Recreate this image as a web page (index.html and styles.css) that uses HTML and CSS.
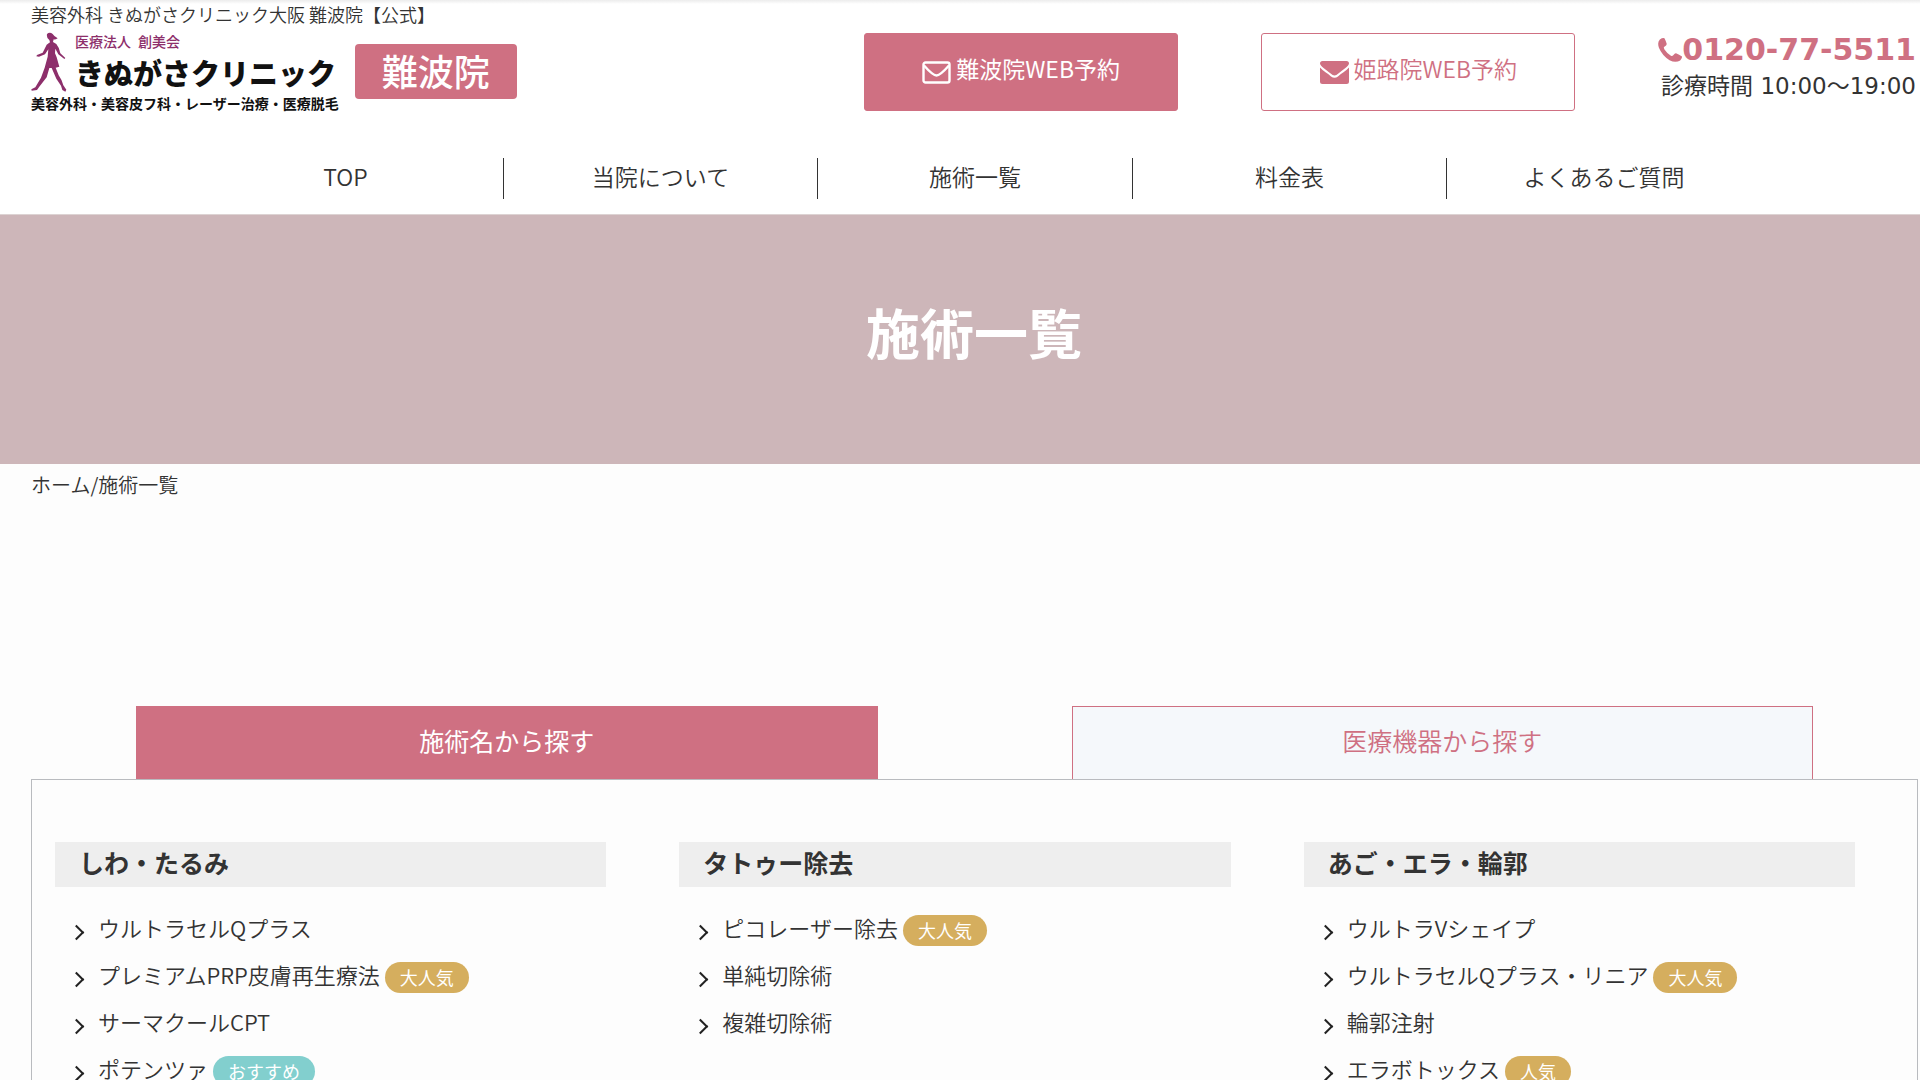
FILE: index.html
```html
<!DOCTYPE html>
<html lang="ja">
<head>
<meta charset="utf-8">
<meta name="viewport" content="width=device-width, initial-scale=1">
<title>施術一覧 | きぬがさクリニック大阪 難波院</title>
<link rel="stylesheet" href="styles.css">
</head>
<body>
<header class="site-header">
  <p class="site-lead">美容外科 きぬがさクリニック大阪 難波院【公式】</p>
  <div class="header-main">
    <a class="brand" href="#">
      <span class="logo">
        <span class="logo-top">
          <svg class="logo-figure" viewBox="36 36 108 180" aria-hidden="true">
            <path d="M84 42Q92 34 101 42Q106 50 116 55Q108 60 104 58L102 66L112 72Q122 84 124 100L139 114L136 117L118 103L109 86L108 100L113 112L121 140L110 143L119 166Q128 178 133 196L142 209L139 215L130 210L126 197L112 176L98 144L91 144L83 172L62 199L54 210L38 212L37 208L49 202L66 173L77 143L86 110L88 88L78 103L60 110L52 109L54 105L71 98L83 74L93 67L91 60Q82 55 84 42Z"/>
          </svg>
          <span class="logo-words">
            <span class="logo-corp">医療法人&#8194;創美会</span>
            <span class="logo-name">きぬがさクリニック</span>
          </span>
        </span>
        <span class="logo-tag">美容外科・美容皮フ科・レーザー治療・医療脱毛</span>
      </span>
      <span class="branch">難波院</span>
    </a>
    <a class="reserve reserve-solid" href="#">
      <svg class="mail" viewBox="0 0 29 23" aria-hidden="true"><rect x="1.5" y="1.5" width="26" height="20" rx="2" fill="none" stroke="currentColor" stroke-width="2.4"/><path d="M2 4.500C6 9 12 14.500 14.500 14.500S23 9 27 4.500" fill="none" stroke="currentColor" stroke-width="2.400"/></svg>
      <span>難波院WEB予約</span>
    </a>
    <a class="reserve" href="#">
      <svg class="mail" viewBox="0 0 29 23" aria-hidden="true"><path d="M2.500 0h24Q29 0 29 2.500C29 5 22 9.500 19 12Q16 14.500 14.500 14.500T10 12C7 9.500 0 5 0 2.500Q0 0 2.500 0Z"/><path d="M0 6.500C3 10 8 12.500 11 15.500Q14.500 18 18 15.500C21 12.500 26 10 29 6.500V20.500Q29 23 26.500 23H2.500Q0 23 0 20.500Z"/></svg>
      <span>姫路院WEB予約</span>
    </a>
    <div class="contact">
      <a class="tel" href="tel:0120775511"><svg class="phone" viewBox="0 0 26 26" aria-hidden="true"><path d="M2 1.500Q5-.5 7 .2Q8.500 3 9.500 6.500Q9.500 8 6.500 9.800Q6 10.500 7 12.500Q10 17 14 19.300Q15.500 20 16.500 18.800Q18.300 16.300 19.500 16.500Q23 18 26 20Q26.300 22 24 24.300Q19 27.500 12.500 24Q4.500 19 1 10.500Q-1 4.500 2 1.500Z"/></svg>0120-77-5511</a>
      <p class="hours">診療時間 10:00～19:00</p>
    </div>
  </div>
  <nav class="gnav" aria-label="メインメニュー">
    <a href="#">TOP</a>
    <a href="#">当院について</a>
    <a href="#">施術一覧</a>
    <a href="#">料金表</a>
    <a href="#">よくあるご質問</a>
  </nav>
</header>
<div class="hero"><h1>施術一覧</h1></div>
<main class="content">
  <nav class="crumbs" aria-label="パンくずリスト"><a href="#">ホーム</a>/<span>施術一覧</span></nav>
  <div class="tabs">
    <button class="tab tab-active" type="button">施術名から探す</button>
    <button class="tab" type="button">医療機器から探す</button>
  </div>
  <div class="panel">
    <section>
      <h2>しわ・たるみ</h2>
      <ul>
        <li><a href="#">ウルトラセルQプラス</a></li>
        <li><a href="#">プレミアムPRP皮膚再生療法</a><span class="badge">大人気</span></li>
        <li><a href="#">サーマクールCPT</a></li>
        <li><a href="#">ポテンツァ</a><span class="badge badge-teal">おすすめ</span></li>
      </ul>
    </section>
    <section>
      <h2>タトゥー除去</h2>
      <ul>
        <li><a href="#">ピコレーザー除去</a><span class="badge">大人気</span></li>
        <li><a href="#">単純切除術</a></li>
        <li><a href="#">複雑切除術</a></li>
      </ul>
    </section>
    <section>
      <h2>あご・エラ・輪郭</h2>
      <ul>
        <li><a href="#">ウルトラVシェイプ</a></li>
        <li><a href="#">ウルトラセルQプラス・リニア</a><span class="badge">大人気</span></li>
        <li><a href="#">輪郭注射</a></li>
        <li><a href="#">エラボトックス</a><span class="badge">人気</span></li>
      </ul>
    </section>
  </div>
</main>
</body>
</html>
```
FILE: styles.css
```css
:root {
  --rose: #cf7082;
  --ink: #333;
}

* {
  box-sizing: border-box;
  margin: 0;
  padding: 0;
}

body {
  background: #fdfdfd;
  color: var(--ink);
  font-family: "Noto Sans CJK JP", sans-serif;
  font-size: 22px;
  font-weight: 350;
}

a {
  color: inherit;
  text-decoration: none;
}

ul {
  list-style: none;
}

svg {
  display: block;
  fill: currentColor;
  flex: none;
}

/* Header */
.site-header {
  background: linear-gradient(#ececec, #fff 4px);
  border-bottom: 1px solid #ddd3d3;
  padding: 3px 2px 0 31px;
}

.site-lead {
  font-size: 18px;
  line-height: 22px;
}

.header-main {
  display: flex;
  align-items: flex-start;
  gap: 83px;
  padding: 7px 2px 0 0;
  height: 109px;
}

.brand {
  display: flex;
  gap: 16px;
  margin-right: auto;
}

.logo {
  color: #111;
  font-weight: 700;
  white-space: nowrap;
}

.logo-top {
  display: flex;
  gap: 8px;
}

.logo-figure {
  width: 36px;
  height: 60px;
  color: #8d2f6b;
}

.logo-words,
.logo-corp,
.logo-name,
.logo-tag {
  display: block;
}

.logo-corp {
  color: #8d2f6b;
  font-size: 14px;
  font-weight: 500;
  line-height: 18px;
}

.logo-name {
  font-size: 29px;
  font-weight: 900;
  line-height: 44px;
}

.logo-tag {
  font-size: 14px;
  line-height: 18px;
}

.branch {
  align-self: flex-start;
  margin-top: 12px;
  padding: 0 27px 2px;
  border-radius: 4px;
  background: var(--rose);
  color: #fff;
  font-size: 36px;
  font-weight: 500;
  line-height: 53px;
}

.reserve {
  display: flex;
  flex: 0 0 calc(100% / 6);
  align-items: center;
  justify-content: center;
  gap: 5px;
  height: 78px;
  margin-top: 1px;
  padding-bottom: 8px;
  border: 1px solid var(--rose);
  border-radius: 3px;
  color: var(--rose);
  font-size: 23px;
  white-space: nowrap;
}

.reserve-solid {
  background: var(--rose);
  color: #fff;
  font-weight: 400;
}

.mail {
  width: 29px;
  height: 23px;
  margin-top: 8px;
}

.contact {
  white-space: nowrap;
  text-align: right;
}

.tel {
  display: flex;
  align-items: center;
  color: var(--rose);
  font-family: "DejaVu Sans", sans-serif;
  font-size: 30px;
  font-weight: 700;
  line-height: 36px;
}

.phone {
  width: 24px;
  height: 26px;
}

.hours {
  font-family: "DejaVu Sans", "Noto Sans CJK JP", sans-serif;
  font-size: 23px;
  font-weight: 400;
  line-height: 36px;
}

.gnav {
  display: grid;
  grid-template-columns: repeat(5, 1fr);
  width: calc(100% * 5 / 6);
  margin: 0 auto;
  padding: 24px 0 15px;
  text-align: center;
  font-size: 23px;
  line-height: 36px;
}

.gnav a {
  padding-bottom: 5px;
}

.gnav a + a {
  border-left: 1px solid var(--ink);
}

/* Page title */
.hero {
  padding: 77px 0 92px 28px;
  background: #cdb6b9;
  color: #fff;
  text-align: center;
}

.hero h1 {
  font-size: 54px;
  font-weight: 700;
  line-height: 80px;
}

/* Content */
.content {
  padding: 0 2px 0 31px;
}

.crumbs {
  padding-top: 5px;
  font-size: 20px;
  line-height: 32px;
}

.tabs {
  display: flex;
  justify-content: space-between;
  padding: 205px 105px 0;
}

.tab {
  flex: 0 0 calc(50% - 97px);
  height: 73px;
  padding-bottom: 6px;
  border: 1px solid var(--rose);
  border-bottom: 0;
  background: #f5f8fb;
  color: var(--rose);
  font-family: inherit;
  font-size: 25px;
  font-weight: inherit;
}

.tab-active {
  background: var(--rose);
  color: #fff;
  font-weight: 400;
}

.panel {
  display: grid;
  grid-template-columns: repeat(3, 1fr);
  gap: 73px;
  padding: 62px 62px 62px 23px;
  border: 1px solid #b9bbbf;
}

.panel h2 {
  padding: 0 24px 5px;
  background: #eee;
  font-size: 25px;
  font-weight: 700;
  line-height: 40px;
}

.panel ul {
  padding: 16px 0 0 16px;
}

.panel li {
  display: flex;
  align-items: center;
  height: 47px;
  white-space: nowrap;
}

.panel li::before {
  content: "";
  width: 9px;
  height: 9px;
  margin: 12px 16px 0 0;
  border: solid #222;
  border-width: 2px 2px 0 0;
  transform: rotate(45deg);
}

.badge {
  margin: 8px 0 0 5px;
  padding: 0 15px;
  border-radius: 16px;
  background: #d5ae5e;
  color: #fff;
  font-size: 18px;
  font-weight: 400;
  line-height: 31px;
}

.badge-teal {
  background: #82cfce;
}
```
